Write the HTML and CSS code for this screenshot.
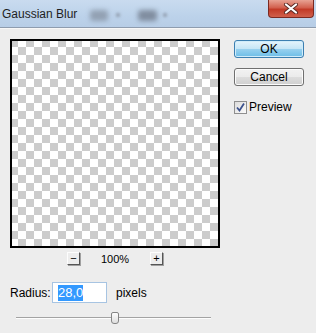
FILE: index.html
```html
<!DOCTYPE html>
<html lang="en">
  <head>
    <meta charset="UTF-8" />
    <meta name="viewport" content="width=device-width, initial-scale=1.0" />
    <title>Gaussian Blur</title>
    <link rel="stylesheet" href="styles.css">
  </head>
  <body>
    <div class="titlebar">
      <span class="title">Gaussian Blur</span>
      <span class="ghost ghost-a"></span>
      <span class="ghost-dot"></span>
      <span class="ghost ghost-b"></span>
      <span class="ghost-dot dot-b"></span>
      <button class="close" type="button">
        <svg width="16" height="11" viewBox="0 0 16 11">
          <path d="M3 1.5 L13 9.5 M13 1.5 L3 9.5" stroke="#5a2a24" stroke-width="4" stroke-linecap="round" />
          <path d="M3 1.5 L13 9.5 M13 1.5 L3 9.5" stroke="#ffffff" stroke-width="2.2" stroke-linecap="round" />
        </svg>
      </button>
    </div>

    <div class="dialog">
      <div class="top">
        <div class="preview-col">
          <div class="preview"></div>
          <div class="zoom-row">
            <span class="zbtn">&minus;</span>
            <span class="zoom-val">100%</span>
            <span class="zbtn">+</span>
          </div>
        </div>

        <div class="actions">
          <button class="btn ok" type="button">OK</button>
          <button class="btn" type="button">Cancel</button>
          <label class="check">
            <span class="box">
              <svg width="11" height="11" viewBox="0 0 11 11">
                <path d="M2 5.5 L4.5 8.5 L9 1.5" fill="none" stroke="#3c528e" stroke-width="1.8" />
              </svg>
            </span>
            Preview
          </label>
        </div>
      </div>

      <div class="radius-row">
        <span class="radius-label">Radius:</span>
        <div class="field"><span class="sel">28,0</span></div>
        <span class="unit">pixels</span>
      </div>

      <div class="slider">
        <div class="track"></div>
        <div class="thumb"></div>
      </div>
    </div>
  </body>
</html>
```

FILE: styles.css
```css
body {
  margin: 0;
  background-color: #ededed;
  font-family: "Liberation Sans", Arial, sans-serif;
  font-size: 12px;
  color: #000;
  overflow: hidden;
}

/* window title */
.titlebar {
  height: 27px;
  display: flex;
  align-items: flex-start;
  background: linear-gradient(#c9dbef, #bcd2ea 60%, #b7cde6);
  border-bottom: 1px solid #8e9cae;
  box-shadow: 0 1px 0 #f7f7f7;
}

.title {
  margin: 7px 0 0 2px;
  font-size: 12px;
  color: #1e1e1e;
}

.ghost {
  width: 18px;
  height: 11px;
  margin-top: 10px;
  background-color: #8490a0;
  border-radius: 3px;
  filter: blur(2.5px);
  opacity: 0.75;
}

.ghost-a {
  margin-left: 13px;
}

.ghost-b {
  margin-left: 18px;
  width: 19px;
  background-color: #6c7686;
}

.ghost-dot {
  width: 4px;
  height: 4px;
  margin: 13px 0 0 8px;
  background-color: #8b97a7;
  border-radius: 50%;
  filter: blur(1.5px);
}

.dot-b {
  margin-left: 6px;
}

.close {
  margin-left: auto;
  margin-right: 2px;
  width: 46px;
  height: 18px;
  padding: 0;
  border: 1px solid #7b2a22;
  border-top: none;
  border-radius: 0 0 4px 4px;
  background: linear-gradient(#e8a293, #d2604e 45%, #c23a27 55%, #d0604c);
  display: flex;
  align-items: center;
  justify-content: center;
}

/* content */
.dialog {
  padding: 11px 0 0 10px;
}

.top {
  display: flex;
}

.preview-col {
  width: 210px;
}

.preview {
  box-sizing: border-box;
  width: 210px;
  height: 209px;
  border: 2px solid #000;
  background-image: conic-gradient(#ffffff 25%, #cccccc 0 50%, #ffffff 0 75%, #cccccc 0);
  background-size: 16px 16px;
  background-origin: border-box;
  background-position: 0 0;
}

.zoom-row {
  margin-top: 4px;
  height: 13px;
  display: flex;
  justify-content: center;
  align-items: center;
}

.zbtn {
  box-sizing: border-box;
  width: 13px;
  height: 13px;
  border: 1px solid #fdfdfd;
  border-right-color: #555;
  border-bottom-color: #555;
  box-shadow: 1px 1px 0 #a0a0a0;
  font-size: 11px;
  line-height: 10px;
  text-align: center;
}

.zoom-val {
  margin: 0 21px;
  font-size: 11px;
}

.actions {
  margin-left: 14px;
  padding-top: 1px;
  display: flex;
  flex-direction: column;
  align-items: flex-start;
}

.btn {
  width: 70px;
  height: 18px;
  padding: 0;
  font-family: "Liberation Sans", Arial, sans-serif;
  font-size: 12px;
  color: #000;
  border: 1px solid #707070;
  border-radius: 3px;
  background: linear-gradient(#f2f2f2, #ebebeb 50%, #dddddd 51%, #cfcfcf);
  box-shadow: inset 0 0 0 1px #fcfcfc;
  margin-bottom: 10px;
}

.ok {
  border-color: #3c7fb1;
  background: linear-gradient(#e5f4fc, #c4e5f6 50%, #98d1ef 51%, #6cbde7);
  box-shadow: inset 0 0 0 1px #d0ecfa;
}

.check {
  margin-top: 4px;
  display: flex;
  align-items: center;
  font-size: 12px;
}

.box {
  box-sizing: border-box;
  width: 13px;
  height: 13px;
  margin-right: 2px;
  border: 1px solid #8f8f8f;
  background: linear-gradient(135deg, #dcdcdc, #fbfbfb);
  display: flex;
  align-items: center;
  justify-content: center;
}

/* radius */
.radius-row {
  margin-top: 17px;
  height: 21px;
  display: flex;
  align-items: center;
}

.radius-label {
  width: 42px;
}

.field {
  box-sizing: border-box;
  width: 55px;
  height: 21px;
  padding-left: 5px;
  border: 1px solid #a7c4e2;
  background-color: #fff;
  display: flex;
  align-items: center;
  font-size: 13px;
}

.sel {
  background-color: #3399ff;
  color: #fff;
  padding: 1px 0;
  line-height: 14px;
}

.unit {
  margin-left: 9px;
}

.slider {
  position: relative;
  margin: 9px 0 0 6px;
  width: 195px;
  height: 12px;
}

.track {
  position: absolute;
  left: 0;
  right: 0;
  top: 5px;
  height: 1px;
  background-color: #a3a3a3;
  border-bottom: 1px solid #fdfdfd;
}

.thumb {
  position: absolute;
  left: 95px;
  top: 0;
  box-sizing: border-box;
  width: 8px;
  height: 12px;
  border: 1px solid #858585;
  border-radius: 2px 2px 3px 3px;
  background: linear-gradient(#fdfdfd, #dedede);
}
```
